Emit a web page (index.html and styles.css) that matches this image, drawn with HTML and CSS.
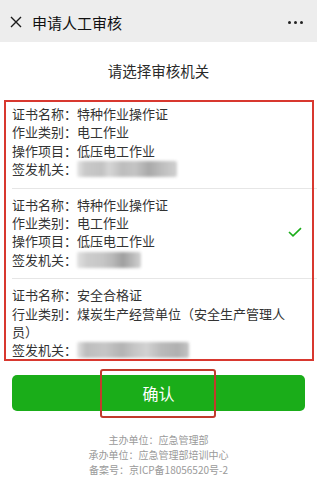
FILE: index.html
```html
<!DOCTYPE html>
<html lang="zh-CN">
<head>
<meta charset="utf-8">
<title>申请人工审核</title>
<link rel="stylesheet" href="styles.css">
</head>
<body>
<header class="topbar">
  <svg class="close" width="12" height="12" viewBox="0 0 12 12"><path d="M1 1L11 11M11 1L1 11" stroke="#1a1a1a" stroke-width="1.4" fill="none"/></svg>
  <span class="topbar-title">申请人工审核</span>
  <span class="more"><i></i><i></i><i></i></span>
</header>

<h1 class="page-title">请选择审核机关</h1>

<div class="list">
  <div class="item">
    <div class="info">
      <div>证书名称：特种作业操作证</div>
      <div>作业类别：电工作业</div>
      <div>操作项目：低压电工作业</div>
      <div>签发机关：<span class="blur b1"></span></div>
    </div>
  </div>
  <div class="item">
    <div class="info">
      <div>证书名称：特种作业操作证</div>
      <div>作业类别：电工作业</div>
      <div>操作项目：低压电工作业</div>
      <div>签发机关：<span class="blur b2"></span></div>
    </div>
    <svg class="check" width="14" height="10" viewBox="0 0 14 10"><path d="M1 5L5 8.8L13 1.2" stroke="#1aad19" stroke-width="1.6" fill="none"/></svg>
  </div>
  <div class="item">
    <div class="info">
      <div>证书名称：安全合格证</div>
      <div>行业类别：煤炭生产经营单位（安全生产管理人员）</div>
      <div>签发机关：<span class="blur b3"></span></div>
    </div>
  </div>
</div>

<div class="actions">
  <button class="confirm">确认</button>
</div>

<footer class="footer">
  <div>主办单位：应急管理部</div>
  <div>承办单位：应急管理部培训中心</div>
  <div>备案号：京ICP备18056520号-2</div>
</footer>
</body>
</html>
```

FILE: styles.css
```css
* { box-sizing: border-box; }
html, body {
  margin: 0;
  padding: 0;
  background: #fff;
}
body {
  font-family: "Noto Sans CJK SC", "Noto Sans", sans-serif;
  color: #333;
  width: 317px;
}
.topbar {
  height: 42px;
  background: #ededed;
  display: flex;
  align-items: center;
  padding: 2px 14px 0 10px;
}
.close { flex: none; }
.topbar-title {
  margin-left: 10px;
  font-size: 15px;
  color: #111;
  flex: 1;
}
.more {
  display: flex;
  gap: 3px;
}
.more i {
  display: block;
  width: 3px;
  height: 3px;
  border-radius: 50%;
  background: #222;
}
.page-title {
  margin: 0;
  padding: 19px 0 17px;
  font-size: 14.5px;
  line-height: 20px;
  font-weight: normal;
  text-align: center;
  color: #2a2a2a;
}
.list {
  position: relative;
}
.list::after {
  content: "";
  position: absolute;
  left: 4px;
  right: 3px;
  top: 2px;
  bottom: 8px;
  border: 2px solid #d8382f;
  pointer-events: none;
}
.item {
  display: flex;
  align-items: center;
  gap: 6px;
  padding: 7px 15px 9px 12px;
  position: relative;
}
.item + .item::before {
  content: "";
  position: absolute;
  left: 12px;
  right: 0;
  top: 0;
  height: 1px;
  background: #e6e6e6;
}
.item + .item { padding-top: 8px; }
.info {
  flex: 1;
  font-size: 13px;
  line-height: 18.4px;
  color: #333;
}
.blur {
  display: inline-block;
  height: 16px;
  vertical-align: -3px;
  filter: blur(1.8px);
  border-radius: 2px;
}
.b1 {
  width: 100px;
  background: linear-gradient(90deg, #e6e6e6 0, #c9c9c9 8%, #c2c2c2 25%, #d6d6d6 32%, #bdbdbd 45%, #c4c4c4 58%, #a9a9a9 72%, #bcbcbc 84%, #d0d0d0 100%);
}
.b2 {
  width: 64px;
  background: linear-gradient(90deg, #e2e2e2 0, #cdcdcd 15%, #c6c6c6 40%, #b9b9b9 55%, #9f9f9f 72%, #b6b6b6 85%, #d2d2d2 100%);
}
.b3 {
  width: 112px;
  background: linear-gradient(90deg, #e4e4e4 0, #bdbdbd 8%, #c6c6c6 25%, #b3b3b3 40%, #c7c7c7 52%, #d2d2d2 62%, #bababa 75%, #b0b0b0 90%, #c4c4c4 100%);
}
.check { flex: none; }
.actions {
  padding: 6px 12px 0;
  position: relative;
}
.actions::after {
  content: "";
  position: absolute;
  left: 100px;
  width: 112px;
  top: 0;
  height: 45px;
  border: 2px solid #c23a2c;
  border-radius: 3px;
  pointer-events: none;
}
.confirm {
  display: block;
  width: 100%;
  height: 36px;
  border: none;
  border-radius: 5px;
  background: #1aad19;
  color: #fff;
  font-family: "Noto Sans CJK SC", sans-serif;
  font-size: 16px;
  padding: 0;
}
.footer {
  margin-top: 21px;
  text-align: center;
  font-size: 10px;
  line-height: 15px;
  color: #9a9a9a;
}
```
